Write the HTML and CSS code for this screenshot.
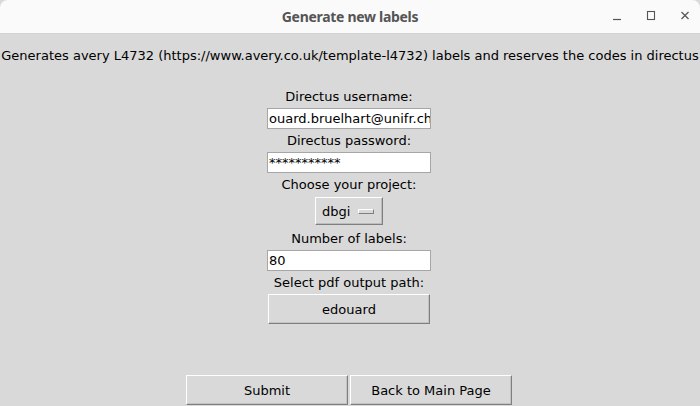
FILE: index.html
```html
<!DOCTYPE html>
<html>
<head>
<meta charset="utf-8">
<link rel="stylesheet" href="styles.css">
</head>
<body>
<div class="window">
  <header class="titlebar">
    <div class="title">Generate new labels</div>
    <div class="controls">
      <svg class="ctl" width="14" height="14" viewBox="0 0 14 14"><path d="M3 10.5H11" stroke="#555" stroke-width="1.2"/></svg>
      <svg class="ctl" width="14" height="14" viewBox="0 0 14 14"><rect x="3.5" y="2.5" width="7" height="8" fill="none" stroke="#555" stroke-width="1.1"/></svg>
      <svg class="ctl" width="14" height="14" viewBox="0 0 14 14"><path d="M3.5 3L10.5 10M10.5 3L3.5 10" stroke="#555" stroke-width="1.2"/></svg>
    </div>
  </header>
  <main class="content">
    <div class="desc">Generates avery L4732 (https://www.avery.co.uk/template-l4732) labels and reserves the codes in directus</div>
    <div class="form">
      <div class="label">Directus username:</div>
      <div class="entry">ouard.bruelhart@unifr.ch</div>
      <div class="label">Directus password:</div>
      <div class="entry">***********</div>
      <div class="label">Choose your project:</div>
      <div class="option"><span>dbgi</span><span class="indicator"></span></div>
      <div class="label">Number of labels:</div>
      <div class="entry">80</div>
      <div class="label">Select pdf output path:</div>
      <div class="button wide">edouard</div>
    </div>
    <div class="actions">
      <div class="button">Submit</div>
      <div class="button">Back to Main Page</div>
    </div>
  </main>
</div>
</body>
</html>
```

FILE: styles.css
```css
html, body {
  margin: 0;
  padding: 0;
  width: 700px;
  height: 406px;
  overflow: hidden;
  background: #d9d9d9;
}
.window {
  width: 700px;
  height: 406px;
  display: flex;
  flex-direction: column;
  background: #d9d9d9;
  font-family: "DejaVu Sans", sans-serif;
  font-size: 13px;
  color: #000;
}
.titlebar {
  height: 33px;
  flex: none;
  background: #fafafa;
  border-bottom: 1px solid #d2d2d2;
  border-radius: 8px 8px 0 0;
  position: relative;
  display: flex;
  align-items: center;
  justify-content: center;
}
.title {
  font-family: "Noto Sans", sans-serif;
  font-weight: bold;
  font-size: 14px;
  color: #555;
  letter-spacing: -0.3px;
}
.controls {
  position: absolute;
  right: 8px;
  top: 9px;
  display: flex;
  gap: 20px;
}
.ctl {
  display: block;
}
.content {
  flex: 1;
  display: flex;
  flex-direction: column;
  align-items: center;
}
.desc {
  margin-top: 11px;
  line-height: 22px;
  white-space: nowrap;
}
.form {
  margin-top: 18px;
  display: flex;
  flex-direction: column;
  align-items: center;
  margin-right: 2px;
}
.label {
  height: 23px;
  line-height: 23px;
}
.entry {
  box-sizing: border-box;
  width: 164px;
  height: 21px;
  line-height: 19px;
  background: #fff;
  border: 1px solid #a6a6a6;
  padding: 0 1px;
  overflow: hidden;
  white-space: nowrap;
}
.option {
  box-sizing: border-box;
  width: 68px;
  height: 28px;
  margin: 1px 0 2px;
  display: flex;
  align-items: center;
  justify-content: space-between;
  padding: 0 8px 0 6px;
  border: 1px solid;
  border-color: #fff #7f7f7f #7f7f7f #fff;
  box-shadow: inset -1px -1px 0 #bcbcbc;
}
.indicator {
  width: 14px;
  height: 3px;
  border: 1px solid;
  border-color: #fff #7f7f7f #7f7f7f #fff;
  background: #d9d9d9;
}
.button {
  box-sizing: border-box;
  width: 162px;
  height: 30px;
  display: flex;
  align-items: center;
  justify-content: center;
  border: 1px solid;
  border-color: #fff #7f7f7f #7f7f7f #fff;
  box-shadow: inset -1px -1px 0 #c3c3c3;
}
.actions {
  margin-top: auto;
  margin-bottom: 1px;
  display: flex;
  gap: 2px;
  margin-right: 2px;
}
```
